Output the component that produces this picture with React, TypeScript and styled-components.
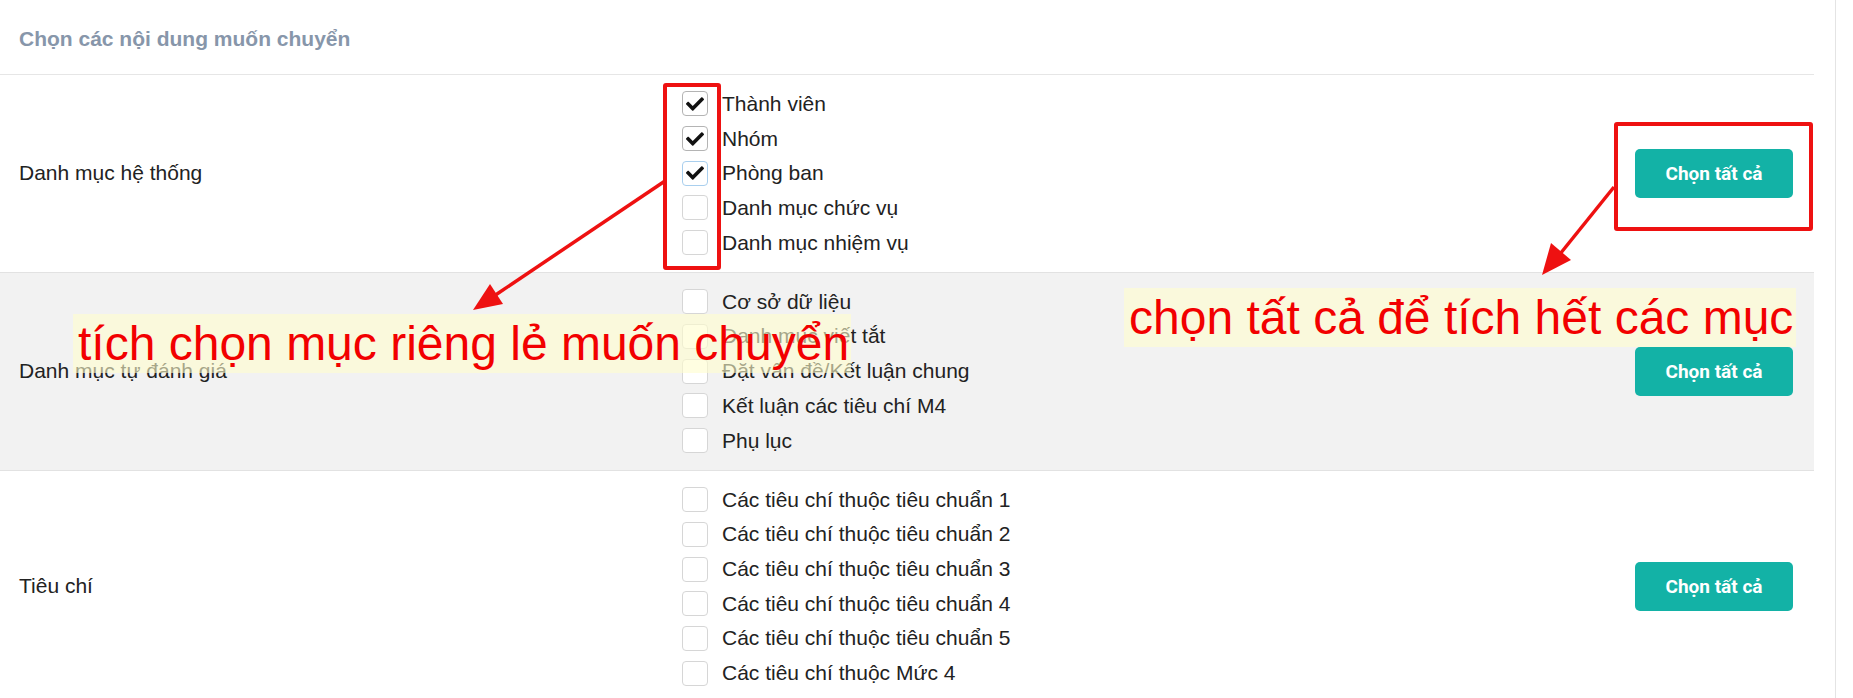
import styled, { createGlobalStyle } from 'styled-components'
import { FaCheck } from 'react-icons/fa'

const GlobalStyle = createGlobalStyle`
  html, body {
    margin: 0;
    padding: 0;
    background: #ffffff;
    font-family: "Liberation Sans", Arial, sans-serif;
    color: #222222;
  }
  * { box-sizing: border-box; }
`

type Item = { label: string; checked?: boolean; focused?: boolean }
type Group = { title: string; items: Item[] }

const groups: Group[] = [
  {
    title: 'Danh mục hệ thống',
    items: [
      { label: 'Thành viên', checked: true },
      { label: 'Nhóm', checked: true },
      { label: 'Phòng ban', checked: true, focused: true },
      { label: 'Danh mục chức vụ' },
      { label: 'Danh mục nhiệm vụ' },
    ],
  },
  {
    title: 'Danh mục tự đánh giá',
    items: [
      { label: 'Cơ sở dữ liệu' },
      { label: 'Danh mục viết tắt' },
      { label: 'Đặt vấn đề/Kết luận chung' },
      { label: 'Kết luận các tiêu chí M4' },
      { label: 'Phụ lục' },
    ],
  },
  {
    title: 'Tiêu chí',
    items: [
      { label: 'Các tiêu chí thuộc tiêu chuẩn 1' },
      { label: 'Các tiêu chí thuộc tiêu chuẩn 2' },
      { label: 'Các tiêu chí thuộc tiêu chuẩn 3' },
      { label: 'Các tiêu chí thuộc tiêu chuẩn 4' },
      { label: 'Các tiêu chí thuộc tiêu chuẩn 5' },
      { label: 'Các tiêu chí thuộc Mức 4' },
    ],
  },
]

function App() {
  return (
    <>
      <GlobalStyle />
      <Frame>
        <Panel>
          <Table>
            <Header>Chọn các nội dung muốn chuyển</Header>
            {groups.map((g, i) => (
              <Row key={g.title} $shaded={i === 1}>
                <RowLabel>{g.title}</RowLabel>
                <ItemList>
                  {g.items.map((it) => (
                    <ItemRow key={it.label}>
                      <Box $checked={!!it.checked} $focused={!!it.focused}>
                        {it.checked && <FaCheck size={18} />}
                      </Box>
                      <span>{it.label}</span>
                    </ItemRow>
                  ))}
                </ItemList>
                <SelectAll>Chọn tất cả</SelectAll>
              </Row>
            ))}
          </Table>

          {/* annotations drawn over the screenshot */}
          <RedFrame $left={663} $top={83} $width={58} $height={187} />
          <RedFrame $left={1614} $top={122} $width={199} $height={109} />
          <Arrows width="1853" height="698" viewBox="0 0 1853 698">
            <line x1="665" y1="181" x2="494" y2="296" stroke="#ee1111" strokeWidth="3.5" />
            <polygon points="473,310 503,304 490,284" fill="#ee1111" />
            <line x1="1614" y1="187" x2="1560" y2="254" stroke="#ee1111" strokeWidth="3.5" />
            <polygon points="1542,275 1571,260 1551,243" fill="#ee1111" />
          </Arrows>
          <Callout $left={73} $top={314} $width={778}>tích chọn mục riêng lẻ muốn chuyển</Callout>
          <Callout $left={1124} $top={288} $width={672}>chọn tất cả để tích hết các mục</Callout>
        </Panel>
      </Frame>
    </>
  )
}

const Frame = styled.div`
  display: flex;
  width: 1853px;
  min-height: 698px;
  overflow: hidden;
`

const Panel = styled.div`
  position: relative;
  width: 1836px;
  min-height: 698px;
  padding-right: 21px;
  border-right: 1px solid #e4e4e4;
`

const Table = styled.div`
  width: 1814px;
  display: flex;
  flex-direction: column;
`

const Header = styled.div`
  height: 75px;
  padding: 26px 19px 0;
  font-size: 21px;
  line-height: 25px;
  font-weight: 700;
  color: #8796aa;
  border-bottom: 1px solid #e6e6e6;
`

const Row = styled.div<{ $shaded: boolean }>`
  display: grid;
  grid-template-columns: 663px 1fr auto;
  align-items: center;
  padding: 11.5px 21px 12px 19px;
  background: ${(p) => (p.$shaded ? '#f2f2f2' : '#ffffff')};
  border-bottom: 1px solid #e2e2e2;
`

const RowLabel = styled.div`
  font-size: 21px;
  color: #222222;
`

const ItemList = styled.div`
  display: flex;
  flex-direction: column;
`

const ItemRow = styled.div`
  display: flex;
  align-items: center;
  gap: 14px;
  height: 34.7px;
  font-size: 21px;
  color: #222222;
`

const Box = styled.span<{ $checked: boolean; $focused: boolean }>`
  display: inline-flex;
  align-items: center;
  justify-content: center;
  width: 26px;
  height: 25px;
  border-radius: 4px;
  background: #ffffff;
  color: #111111;
  border: 1px solid
    ${(p) => (p.$focused ? '#a9cfee' : p.$checked ? '#b4b4b4' : '#d6d6d6')};
`

const SelectAll = styled.button`
  width: 158px;
  height: 49px;
  border: none;
  border-radius: 5px;
  background: #13b2a6;
  color: #ffffff;
  font-family: Roboto, "Liberation Sans", sans-serif;
  font-weight: 700;
  font-size: 19px;
  cursor: pointer;
`

const RedFrame = styled.div<{ $left: number; $top: number; $width: number; $height: number }>`
  position: absolute;
  left: ${(p) => p.$left}px;
  top: ${(p) => p.$top}px;
  width: ${(p) => p.$width}px;
  height: ${(p) => p.$height}px;
  border: 4px solid #ee1111;
  border-radius: 3px;
  pointer-events: none;
`

const Arrows = styled.svg`
  position: absolute;
  left: 0;
  top: 0;
  pointer-events: none;
`

const Callout = styled.div<{ $left: number; $top: number; $width: number }>`
  position: absolute;
  left: ${(p) => p.$left}px;
  top: ${(p) => p.$top}px;
  width: ${(p) => p.$width}px;
  height: 59px;
  padding-left: 5px;
  font-size: 48px;
  line-height: 59px;
  color: #f20000;
  white-space: nowrap;
  background: rgba(255, 253, 205, 0.6);
  pointer-events: none;
`

export default App
